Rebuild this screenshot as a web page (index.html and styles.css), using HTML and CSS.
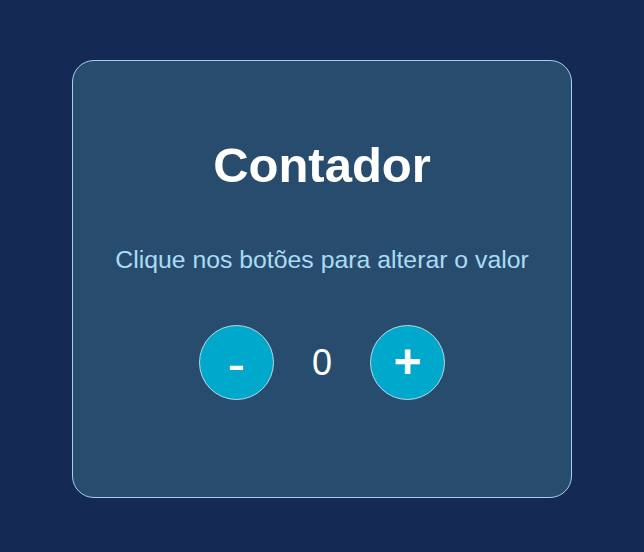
FILE: index.html
```html
<!DOCTYPE html>
<html lang="pt">
<head>
<meta charset="utf-8">
<title>Contador</title>
<link rel="stylesheet" href="styles.css">
</head>
<body>
  <main class="card">
    <h1 class="title">Contador</h1>
    <p class="subtitle">Clique nos botões para alterar o valor</p>
    <div class="controls">
      <button class="btn btn-minus" type="button">-</button>
      <span class="count">0</span>
      <button class="btn btn-plus" type="button">+</button>
    </div>
  </main>
</body>
</html>
```
FILE: styles.css
```css
html, body {
  margin: 0;
  height: 100%;
}
body {
  background: #142a55;
  font-family: "Liberation Sans", Arial, sans-serif;
  display: flex;
  align-items: center;
  justify-content: center;
  padding-top: 6px;
  box-sizing: border-box;
}
.card {
  width: 500px;
  box-sizing: border-box;
  background: #284c6e;
  border: 1px solid #a6cfee;
  border-radius: 22px;
  padding: 77px 30px 97px;
  text-align: center;
}
.title {
  margin: 0 0 54px;
  font-size: 49px;
  line-height: 55px;
  font-weight: bold;
  color: #ffffff;
}
.subtitle {
  margin: 0 0 53px;
  font-size: 24.8px;
  line-height: 25px;
  color: #aadcf5;
}
.controls {
  display: flex;
  justify-content: center;
  align-items: center;
  gap: 37px;
}
.btn {
  width: 75px;
  height: 75px;
  box-sizing: border-box;
  border-radius: 50%;
  border: 1px solid #b5dbe8;
  background: #00a8cc;
  color: #ffffff;
  font-family: "Liberation Sans", Arial, sans-serif;
  font-weight: bold;
  line-height: 1;
  padding: 0;
  display: flex;
  align-items: center;
  justify-content: center;
}
.btn-minus {
  font-size: 54px;
  font-weight: normal;
}
.btn-plus {
  font-size: 48px;
  padding-bottom: 2px;
}
.count {
  width: 22px;
  font-size: 36px;
  color: #ffffff;
}
```
